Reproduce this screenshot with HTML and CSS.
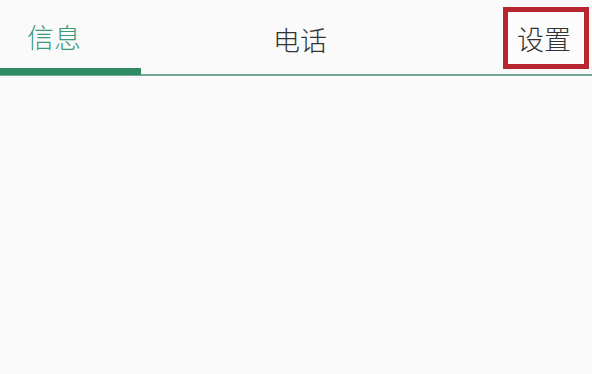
FILE: index.html
```html
<!DOCTYPE html>
<html lang="zh">
<head>
<meta charset="utf-8">
<link rel="stylesheet" href="styles.css">
</head>
<body>
<div class="tabs">
  <div class="tab tab-active"><span class="label">信息</span></div>
  <div class="tab tab-mid"><span class="label">电话</span></div>
  <div class="tab tab-last"><span class="label boxed">设置</span></div>
</div>
<div class="content"></div>
</body>
</html>
```
FILE: styles.css
```css
html, body {
  margin: 0;
  padding: 0;
  background: #fafafa;
  width: 592px;
  height: 374px;
  overflow: hidden;
  font-family: "Noto Sans CJK SC", "Noto Sans", sans-serif;
}
.tabs {
  display: flex;
  align-items: flex-start;
  height: 76px;
  border-bottom: 2px solid #74a998;
  box-sizing: border-box;
}
.tab {
  display: flex;
  align-items: center;
  height: 74px;
  box-sizing: border-box;
}
.label {
  font-size: 27px;
  font-weight: 300;
  line-height: 1;
  color: #333333;
}
.tab-active {
  width: 141px;
  height: 75px;
  margin-bottom: -1px;
  padding-left: 27px;
  padding-top: 4px;
  border-bottom: 7px solid #2f8a66;
}
.tab-active .label {
  color: #3c9a7a;
}
.tab-mid {
  margin-left: 132px;
  padding-top: 4px;
}
.tab-last {
  margin-left: 176px;
  align-items: flex-start;
  padding-top: 7px;
}
.boxed {
  display: flex;
  align-items: center;
  width: 86px;
  height: 62px;
  padding-left: 9px;
  padding-top: 1px;
  box-sizing: border-box;
  border: 5px solid #b72531;
  background: #fcfcfc;
}
.content {
  flex: 1;
}
```
